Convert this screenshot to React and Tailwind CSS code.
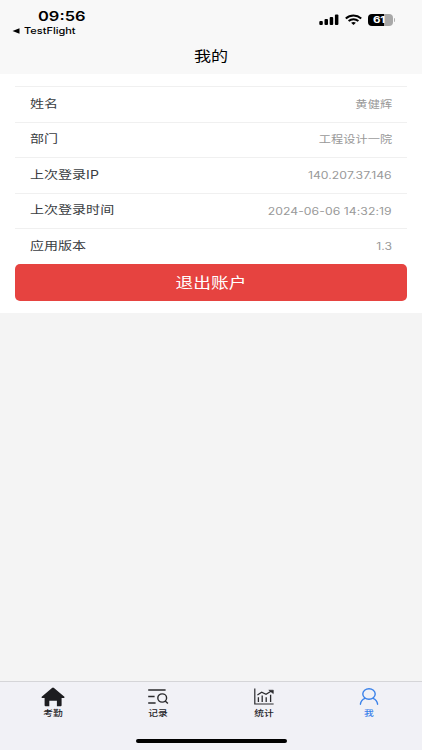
import React from "react";

const rows = [
  { label: "姓名", value: "黄健辉" },
  { label: "部门", value: "工程设计一院" },
  { label: "上次登录IP", value: "140.207.37.146" },
  { label: "上次登录时间", value: "2024-06-06 14:32:19" },
  { label: "应用版本", value: "1.3" },
];

const HomeIcon = () => (
  <svg width="24" height="20" viewBox="0 0 24 20" fill="#1d1d20">
    <path d="M11 .9Q12 .1 13 .9L23.4 9.8Q24 10.8 22.9 10.9H20.6V18.3Q20.6 19.3 19.6 19.3H15.9V13.7H8.3V19.3H4.6Q3.6 19.3 3.6 18.3V10.9H1.1Q0 10.8 .7 9.8Z" />
  </svg>
);

const RecordIcon = () => (
  <svg width="22" height="18" viewBox="0 0 22 18" fill="none" stroke="#2a2a2d" strokeWidth="1.4">
    <path d="M1.2 2H18.6M1.2 8.5H7.6M1.2 15H8.6" />
    <ellipse cx="15.2" cy="10" rx="4.4" ry="4.1" />
    <path d="M18.2 13L20.9 15.5" />
  </svg>
);

const StatIcon = () => (
  <svg width="22" height="18" viewBox="0 0 22 18" fill="none" stroke="#2a2a2d" strokeWidth="1.2">
    <path d="M1.8 .6V16H20.6" />
    <path d="M5.4 14V9.2M9.2 14V7.5M13.2 14V9.2M17.6 14V6.8" strokeWidth="1.3" />
    <path d="M4.4 7L8.7 4.3L13 6.3L18 3.2" />
    <path d="M15.8 2.2H20.3V5.6Z" fill="#2a2a2d" strokeWidth=".6" />
  </svg>
);

const UserIcon = () => (
  <svg width="20" height="18" viewBox="0 0 20 18" fill="none" stroke="#3b82ea" strokeWidth="1.4" strokeLinecap="round">
    <ellipse cx="10" cy="6" rx="6.2" ry="5.2" />
    <path d="M1.4 16.2Q2 12 6 10.4M18.6 16.2Q18 12 14 10.4" />
  </svg>
);

const tabs = [
  { name: "考勤", icon: <HomeIcon />, color: "text-[#242428]" },
  { name: "记录", icon: <RecordIcon />, color: "text-[#242428]" },
  { name: "统计", icon: <StatIcon />, color: "text-[#242428]" },
  { name: "我", icon: <UserIcon />, color: "text-[#3b82ea]" },
];

const StatusBar = () => {
  return (
    <div className="flex justify-between h-[38px] text-black">
      <div className="pl-[12px] pt-[6px]">
        <div className="pl-[26px] h-[18px] leading-[18px]">
          <span className="inline-block origin-left scale-x-[1.22] text-[13.5px] font-semibold">09:56</span>
        </div>
        <div className="flex items-center h-[13px]">
          <svg width="8" height="6" viewBox="0 0 8 6">
            <path d="M.5 3L7.5 .3V5.7Z" />
          </svg>
          <span className="ml-[4px] inline-block origin-left scale-x-[1.22] text-[9px] leading-[13px] font-medium">
            TestFlight
          </span>
        </div>
      </div>
      <div className="flex items-start pt-[14px] pr-[27px]">
        <svg width="20" height="11" viewBox="0 0 20 11" className="mr-[6px]">
          <rect x=".3" y="7" width="3.5" height="4" rx="1" />
          <rect x="5.5" y="5" width="3.5" height="6" rx="1" />
          <rect x="10.7" y="3" width="3.5" height="8" rx="1" />
          <rect x="15.9" y=".5" width="3.5" height="10.5" rx="1" />
        </svg>
        <svg width="17" height="11" viewBox="0 0 17 11" className="mr-[6px]" fill="none" stroke="#000" strokeWidth="2">
          <path d="M.8 4.4Q4.2 1.4 8.5 1.4Q12.8 1.4 16.2 4.4" />
          <path d="M3.6 7.1Q5.8 5.2 8.5 5.2Q11.2 5.2 13.4 7.1" />
          <path d="M6.1 8.7Q8.5 7.2 10.9 8.7L8.5 11Z" fill="#000" stroke="none" />
        </svg>
        <div className="flex items-center">
          <div className="flex items-center w-[25px] h-[12px] pl-[5px] rounded-[4px] bg-linear-to-r from-black from-62% to-[#a8a8a8] to-62%">
            <span className="inline-block origin-left scale-x-[1.22] text-[9.5px] leading-[12px] font-bold tracking-[-0.2px] text-white">
              61
            </span>
          </div>
          <div className="ml-[1px] w-[1px] h-[4px] rounded-r-full bg-[#b0b0b0]" />
        </div>
      </div>
    </div>
  );
};

const App = () => {
  return (
    <div className="flex flex-col w-[422px] h-[750px] overflow-hidden bg-[#f4f4f4] font-['Inter','Noto_Sans_CJK_SC',sans-serif]">
      <header className="h-[74px] bg-[#f8f8f8]">
        <StatusBar />
        <h1 className="h-[35px] leading-[35px] text-center text-black">
          <span className="inline-block scale-x-[1.22] text-[14px]">我的</span>
        </h1>
      </header>

      <main className="h-[239px] bg-white px-[15px] pt-[12px]">
        <ul>
          {rows.map((row) => (
            <li
              key={row.label}
              className="flex items-center justify-between h-[35.6px] px-[15px] border-t border-[#f0f0f0]"
            >
              <span className="inline-block origin-left scale-x-[1.22] text-[11.5px] text-[#3a3d42]">{row.label}</span>
              <span className="inline-block origin-right scale-x-[1.22] text-[10px] tracking-[0.05px] text-[#999999]">
                {row.value}
              </span>
            </li>
          ))}
        </ul>
        <button className="block w-full h-[37px] rounded-[5px] bg-[#e64340] text-white">
          <span className="inline-block scale-x-[1.22] text-[14.5px] leading-[37px]">退出账户</span>
        </button>
      </main>

      <footer className="mt-auto h-[69px] bg-[#f1f1f6] border-t border-[#d5d5d8]">
        <nav className="grid grid-cols-4 h-[57px] pt-[5px]">
          {tabs.map((tab) => (
            <div key={tab.name} className={`flex flex-col items-center ${tab.color}`}>
              <div className="flex items-center justify-center h-[20px]">{tab.icon}</div>
              <span className="inline-block scale-x-[1.22] text-[8px] leading-[12px] font-medium">{tab.name}</span>
            </div>
          ))}
        </nav>
        <div className="mx-auto w-[151px] h-[4px] rounded-full bg-black" />
      </footer>
    </div>
  );
};

export default App;
